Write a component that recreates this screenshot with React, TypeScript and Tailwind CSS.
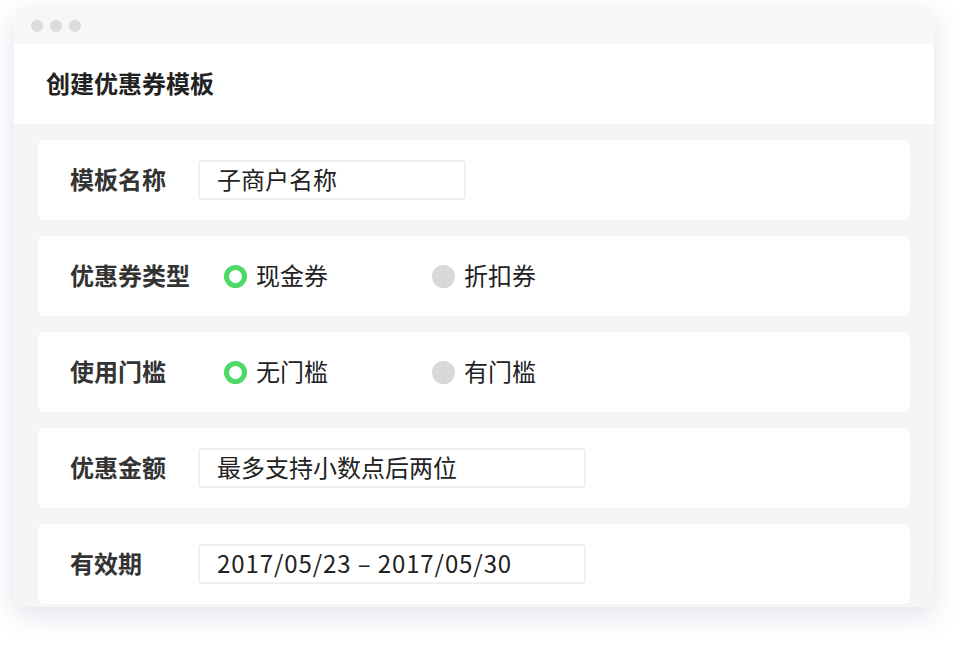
const font = { fontFamily: '"Noto Sans CJK SC", "Noto Sans", sans-serif' };

function Radio({ checked, label }: { checked: boolean; label: string }) {
  return (
    <div className="flex items-center gap-[9px] w-[208px]">
      {checked ? (
        <span className="size-[23px] rounded-full border-[5px] border-[#4cd964] bg-white" />
      ) : (
        <span className="size-[23px] rounded-full bg-[#d8d8d8]" />
      )}
      <span className="text-[24px] leading-none text-[#222] mb-[3px]">{label}</span>
    </div>
  );
}

function Row({ label, children }: { label: string; children: React.ReactNode }) {
  return (
    <div className="bg-white rounded-[6px] h-[80px] flex items-center pl-[32px] shrink-0">
      <div className="w-[128px] text-[24px] leading-none font-semibold text-[#333] mb-[3px]">{label}</div>
      {children}
    </div>
  );
}

function Field({ value, width, wide }: { value: string; width: string; wide?: boolean }) {
  return (
    <div
      className={`${width} h-[40px] border-2 border-[#f0f0f0] rounded-[4px] flex items-center pl-[17px] pb-[3px] text-[24px] leading-none text-[#222] ${
        wide ? "tracking-[0.9px]" : "tracking-normal"
      }`}
    >
      {value}
    </div>
  );
}

export default function App() {
  return (
    <div className="w-[968px] h-[648px] bg-white pt-[8px] pl-[14px]" style={font}>
      <div className="w-[920px] h-[599px] rounded-[8px] overflow-hidden flex flex-col shadow-[0_8px_28px_rgba(60,80,130,0.16)]">
        {/* Title bar */}
        <div className="h-[36px] bg-[#f7f7f7] flex items-center gap-[7px] pl-[17px] shrink-0">
          <span className="size-[12px] rounded-full bg-[#dcdcdc]" />
          <span className="size-[12px] rounded-full bg-[#dcdcdc]" />
          <span className="size-[12px] rounded-full bg-[#dcdcdc]" />
        </div>
        {/* Header */}
        <div className="h-[80px] bg-white flex items-center pl-[32px] shrink-0">
          <h1 className="text-[24px] leading-none font-semibold text-[#222] mb-[2px]">创建优惠券模板</h1>
        </div>
        {/* Body */}
        <div className="flex-1 bg-[#f5f5f5] px-[24px] pt-[16px] flex flex-col gap-[16px] overflow-hidden">
          <Row label="模板名称">
            <Field value="子商户名称" width="w-[268px]" />
          </Row>
          <Row label="优惠券类型">
            <div className="flex pl-[26px]">
              <Radio checked label="现金券" />
              <Radio checked={false} label="折扣券" />
            </div>
          </Row>
          <Row label="使用门槛">
            <div className="flex pl-[26px]">
              <Radio checked label="无门槛" />
              <Radio checked={false} label="有门槛" />
            </div>
          </Row>
          <Row label="优惠金额">
            <Field value="最多支持小数点后两位" width="w-[388px]" />
          </Row>
          <Row label="有效期">
            <Field value="2017/05/23 – 2017/05/30" width="w-[388px]" wide />
          </Row>
        </div>
      </div>
    </div>
  );
}
